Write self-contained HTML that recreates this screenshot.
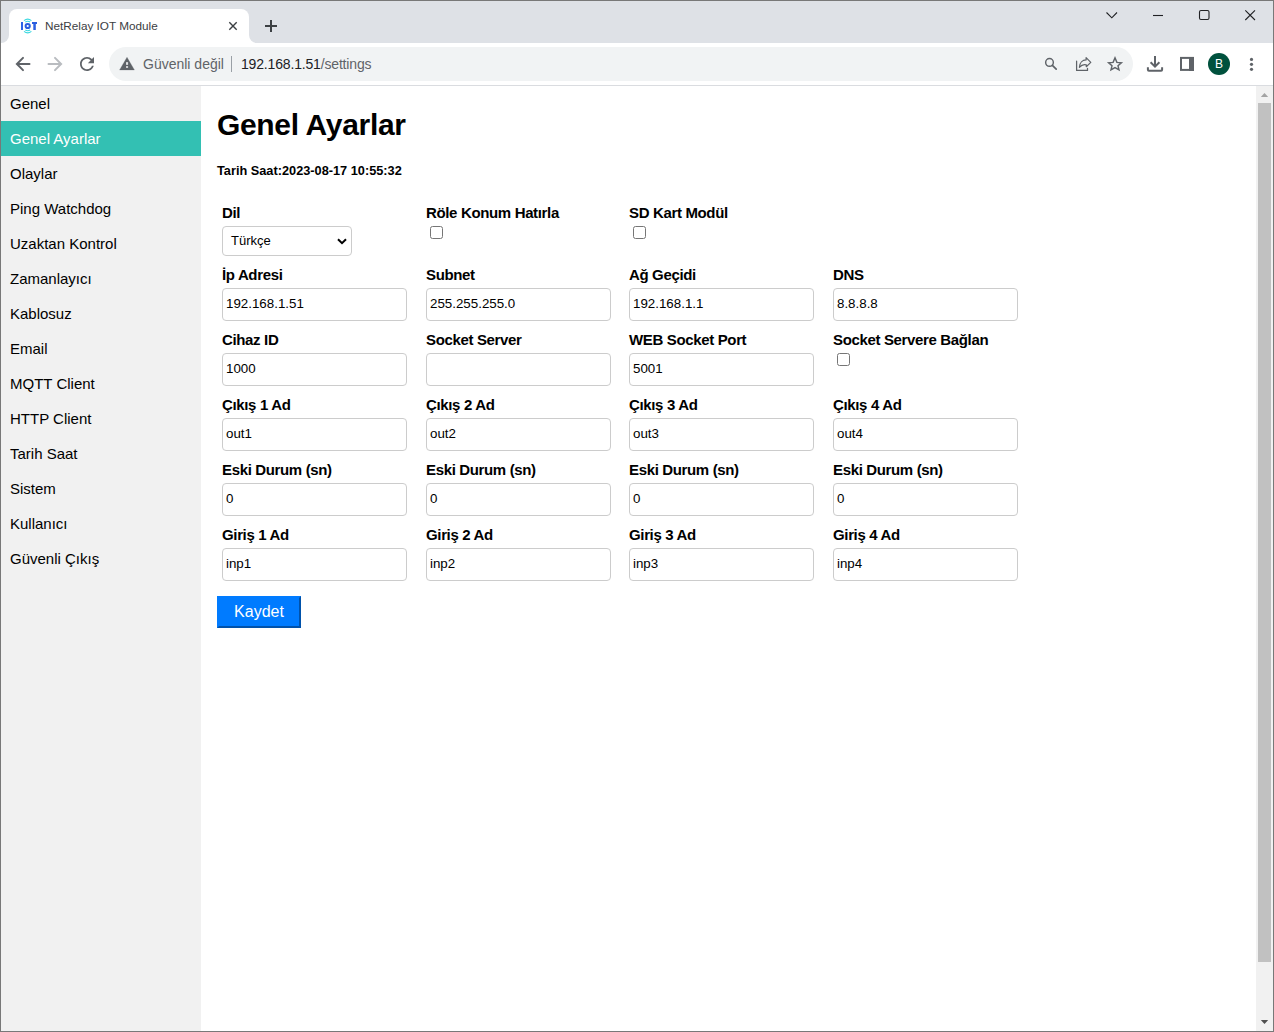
<!DOCTYPE html>
<html><head><meta charset="utf-8">
<style>
*{box-sizing:border-box}
html,body{margin:0;padding:0;width:1274px;height:1032px;overflow:hidden;background:#fff;font-family:"Liberation Sans",sans-serif}
.a{position:absolute}
#tabstrip{left:0;top:0;width:1274px;height:43px;background:#dee1e6}
#tab{left:9px;top:9px;width:240px;height:34px;background:#fff;border-radius:8px 8px 0 0}
.flare{top:35px;width:8px;height:8px;background:#fff}
.flare i{position:absolute;left:0;top:0;width:8px;height:8px;background:#dee1e6}
#tabtitle{left:45px;top:18.5px;font-size:11.75px;color:#3c4043;white-space:nowrap}
#toolbar{left:0;top:43px;width:1274px;height:42px;background:#fff}
#sep{left:0;top:85px;width:1274px;height:1px;background:#dadce0}
#omni{left:109px;top:47px;width:1024px;height:34px;background:#f1f3f4;border-radius:17px}
#omnitext{left:143px;top:56px;font-size:14px;color:#5f6368;white-space:nowrap}
#url{left:241px;top:56px;font-size:14px;letter-spacing:-0.17px;color:#202124;white-space:nowrap}
#url span{color:#5f6368}
#bar{left:231px;top:56px;width:1px;height:16px;background:#9aa0a6}
#avatar{left:1208px;top:53px;width:22px;height:22px;border-radius:50%;background:#00513d;color:#fff;font-size:12px;text-align:center;line-height:22px}
#sidebar{left:1px;top:86px;width:200px;height:945px;background:#f1f1f1}
.nav{position:absolute;left:0;width:200px;height:35px;font-size:15px;color:#000;padding-left:9px;line-height:35px;white-space:nowrap}
.nav.act{background:#33c0b3;color:#fff}
#scroll{left:1256px;top:86px;width:17px;height:945px;background:#f1f1f1}
#thumb{left:1258px;top:103px;width:13px;height:859px;background:#c1c1c1}
.bl{background:#787878}
h1{position:absolute;margin:0;left:217px;top:108px;font-size:30px;letter-spacing:-0.33px;font-weight:bold;white-space:nowrap;color:#000}
#dt{left:217px;top:163px;font-size:12.75px;font-weight:bold;white-space:nowrap}
.lbl{position:absolute;font-size:15px;letter-spacing:-0.35px;font-weight:bold;white-space:nowrap;color:#000}
.inp{position:absolute;width:185px;height:33px;border:1px solid #ccc;border-radius:4px;background:#fff;font-size:13.33px;color:#000;padding-left:3px;line-height:30px;white-space:nowrap}
.cb{position:absolute;width:13px;height:13px;border:1px solid #767676;border-radius:2.5px;background:#fff}
#sel{left:222px;top:226px;width:130px;height:30px;border:1px solid #ccc;border-radius:4px;font-size:13px;padding-left:8px;line-height:28px}
#btn{left:217px;top:596px;width:84px;height:32px;background:#007bff;border:2px outset #007bff;color:#fff;font-size:16px;text-align:center;line-height:28px}
</style></head><body>
<div class="a" id="tabstrip"></div>
<div class="a" id="tab"></div>
<div class="a flare" style="left:1px"><i style="border-radius:0 0 8px 0"></i></div>
<div class="a flare" style="left:249px"><i style="border-radius:0 0 0 8px"></i></div>
<div class="a" id="tabtitle">NetRelay IOT Module</div>
<div class="a" id="toolbar"></div>
<div class="a" id="omni"></div>
<div class="a" id="omnitext">Güvenli değil</div>
<div class="a" id="bar"></div>
<div class="a" id="url">192.168.1.51<span>/settings</span></div>
<div class="a" id="avatar">B</div>
<div class="a" id="sep"></div>

<svg class="a" style="left:0;top:0" width="1274" height="86" viewBox="0 0 1274 86">
 <!-- IOT favicon -->
 <g transform="translate(21,18)">
  <rect x="0" y="4" width="2" height="8" fill="#2a63e8"/>
  <circle cx="6.7" cy="8" r="2.1" fill="none" stroke="#2a5fe0" stroke-width="2"/>
  <rect x="11" y="4" width="5" height="2" fill="#2a5fe0"/>
  <rect x="12.3" y="4" width="2.5" height="8" fill="#2a5fe0"/>
  <path d="M3 2.6 Q6.7 -0.3 10.4 2.6 M4.3 3.9 Q6.7 2.5 9.1 3.9" fill="none" stroke="#3ad8e0" stroke-width="1.1"/>
  <path d="M3 13.4 Q6.7 16.3 10.4 13.4 M4.3 12.1 Q6.7 13.5 9.1 12.1" fill="none" stroke="#3ad8e0" stroke-width="1.1"/>
 </g>
 <!-- tab close -->
 <path d="M229.3 22.3 L236.7 29.7 M236.7 22.3 L229.3 29.7" stroke="#3c4043" stroke-width="1.4"/>
 <!-- new tab plus -->
 <path d="M271 20 V32 M265 26 H277" stroke="#3c4043" stroke-width="2"/>
 <!-- window controls -->
 <path d="M1106.5 12.5 L1111.8 17.8 L1117 12.5" fill="none" stroke="#202124" stroke-width="1.1"/>
 <path d="M1153 15.5 H1163" stroke="#202124" stroke-width="1.1"/>
 <rect x="1199.5" y="10.5" width="9.5" height="9" rx="1.5" fill="none" stroke="#202124" stroke-width="1.1"/>
 <path d="M1245.3 10.3 L1255 20 M1255 10.3 L1245.3 20" stroke="#202124" stroke-width="1.1"/>
 <!-- back -->
 <path d="M29.5 64 H17.5 M23 57.9 L16.9 64 L23 70.1" fill="none" stroke="#5f6368" stroke-width="2" stroke-linecap="round"/>
 <!-- forward -->
 <path d="M48.5 64 H60.5 M55 57.9 L61.1 64 L55 70.1" fill="none" stroke="#b9bcc0" stroke-width="2" stroke-linecap="round"/>
 <!-- reload -->
 <g transform="translate(76.5,53.5) scale(0.875)"><path fill="#5f6368" d="M17.65 6.35C16.2 4.9 14.21 4 12 4c-4.42 0-7.99 3.58-7.99 8s3.57 8 7.99 8c3.73 0 6.84-2.55 7.730-6h-2.08c-.82 2.33-3.04 4-5.65 4-3.310 0-6-2.690-6-6s2.690-6 6-6c1.66 0 3.14.69 4.22 1.78L13 11h7V4l-2.35 2.35z"/></g>
 <!-- warning -->
 <path d="M127 57.3 L134.4 69.9 H119.6 Z M126 62 V65 H128.1 V62 Z M126 66 V68 H128.1 V66 Z" fill="#5f6368" fill-rule="evenodd" stroke="#5f6368" stroke-width="0.3" stroke-linejoin="round"/>
 <!-- search -->
 <circle cx="1049.5" cy="62.4" r="3.85" fill="none" stroke="#5f6368" stroke-width="1.45"/>
 <path d="M1052.4 65.3 L1056.2 69.1" stroke="#5f6368" stroke-width="1.7" stroke-linecap="round"/>
 <!-- share -->
 <path d="M1076.6 61.2 V70.4 H1087.5 V68.3" fill="none" stroke="#5f6368" stroke-width="1.25" stroke-linejoin="round" stroke-linecap="round"/>
 <path d="M1079.4 67.3 C1079.6 62.6 1082.6 60 1086.1 59.9 V57.6 L1090.8 62.4 L1086.3 66.7 V64.8 C1083.6 64 1081.4 64.9 1079.4 67.3 Z" fill="none" stroke="#5f6368" stroke-width="1.2" stroke-linejoin="round"/>
 <!-- star -->
 <path d="M1115 57.9 L1116.9 62.4 L1121.4 62.8 L1118 65.8 L1119 69.9 L1115 67.7 L1111 69.9 L1112 65.8 L1108.6 62.8 L1113.1 62.4 Z" fill="none" stroke="#5f6368" stroke-width="1.45" stroke-linejoin="miter"/>
 <!-- download -->
 <path d="M1155 56 V66.5 M1150.6 62.2 L1155 66.6 L1159.4 62.2" fill="none" stroke="#5f6368" stroke-width="2"/>
 <path d="M1147.9 67.3 V69.8 Q1147.9 70.8 1148.9 70.8 H1161.1 Q1162.1 70.8 1162.1 69.8 V67.3" fill="none" stroke="#5f6368" stroke-width="2"/>
 <!-- side panel -->
 <rect x="1181" y="57.9" width="12" height="12" fill="none" stroke="#5f6368" stroke-width="2"/>
 <rect x="1189" y="57" width="5" height="14" fill="#5f6368"/>
 <!-- dots -->
 <circle cx="1251.5" cy="59.4" r="1.6" fill="#5f6368"/>
 <circle cx="1251.5" cy="64.3" r="1.6" fill="#5f6368"/>
 <circle cx="1251.5" cy="69.3" r="1.6" fill="#5f6368"/>
</svg>



<div class="a" id="sidebar">
<div class="nav" style="top:0">Genel</div>
<div class="nav act" style="top:35px">Genel Ayarlar</div>
<div class="nav" style="top:70px">Olaylar</div>
<div class="nav" style="top:105px">Ping Watchdog</div>
<div class="nav" style="top:140px">Uzaktan Kontrol</div>
<div class="nav" style="top:175px">Zamanlayıcı</div>
<div class="nav" style="top:210px">Kablosuz</div>
<div class="nav" style="top:245px">Email</div>
<div class="nav" style="top:280px">MQTT Client</div>
<div class="nav" style="top:315px">HTTP Client</div>
<div class="nav" style="top:350px">Tarih Saat</div>
<div class="nav" style="top:385px">Sistem</div>
<div class="nav" style="top:420px">Kullanıcı</div>
<div class="nav" style="top:455px">Güvenli Çıkış</div>
</div>

<h1>Genel Ayarlar</h1>
<div class="a" id="dt">Tarih Saat:2023-08-17 10:55:32</div>

<div class="lbl" style="left:222px;top:204px">Dil</div>
<div class="a" id="sel">Türkçe</div>
<svg class="a" style="left:336px;top:237px" width="12" height="9"><path d="M2 2.2 L6 6.2 L10 2.2" fill="none" stroke="#000" stroke-width="2"/></svg>
<div class="lbl" style="left:426px;top:204px">Röle Konum Hatırla</div>
<div class="cb" style="left:430px;top:226px"></div>
<div class="lbl" style="left:629px;top:204px">SD Kart Modül</div>
<div class="cb" style="left:633px;top:226px"></div>

<div class="lbl" style="left:222px;top:266px">İp Adresi</div>
<div class="inp" style="left:222px;top:288px">192.168.1.51</div>
<div class="lbl" style="left:426px;top:266px">Subnet</div>
<div class="inp" style="left:426px;top:288px">255.255.255.0</div>
<div class="lbl" style="left:629px;top:266px">Ağ Geçidi</div>
<div class="inp" style="left:629px;top:288px">192.168.1.1</div>
<div class="lbl" style="left:833px;top:266px">DNS</div>
<div class="inp" style="left:833px;top:288px">8.8.8.8</div>

<div class="lbl" style="left:222px;top:331px">Cihaz ID</div>
<div class="inp" style="left:222px;top:353px">1000</div>
<div class="lbl" style="left:426px;top:331px">Socket Server</div>
<div class="inp" style="left:426px;top:353px"></div>
<div class="lbl" style="left:629px;top:331px">WEB Socket Port</div>
<div class="inp" style="left:629px;top:353px">5001</div>
<div class="lbl" style="left:833px;top:331px">Socket Servere Bağlan</div>
<div class="cb" style="left:837px;top:353px"></div>

<div class="lbl" style="left:222px;top:396px">Çıkış 1 Ad</div>
<div class="inp" style="left:222px;top:418px">out1</div>
<div class="lbl" style="left:426px;top:396px">Çıkış 2 Ad</div>
<div class="inp" style="left:426px;top:418px">out2</div>
<div class="lbl" style="left:629px;top:396px">Çıkış 3 Ad</div>
<div class="inp" style="left:629px;top:418px">out3</div>
<div class="lbl" style="left:833px;top:396px">Çıkış 4 Ad</div>
<div class="inp" style="left:833px;top:418px">out4</div>

<div class="lbl" style="left:222px;top:461px">Eski Durum (sn)</div>
<div class="inp" style="left:222px;top:483px">0</div>
<div class="lbl" style="left:426px;top:461px">Eski Durum (sn)</div>
<div class="inp" style="left:426px;top:483px">0</div>
<div class="lbl" style="left:629px;top:461px">Eski Durum (sn)</div>
<div class="inp" style="left:629px;top:483px">0</div>
<div class="lbl" style="left:833px;top:461px">Eski Durum (sn)</div>
<div class="inp" style="left:833px;top:483px">0</div>

<div class="lbl" style="left:222px;top:526px">Giriş 1 Ad</div>
<div class="inp" style="left:222px;top:548px">inp1</div>
<div class="lbl" style="left:426px;top:526px">Giriş 2 Ad</div>
<div class="inp" style="left:426px;top:548px">inp2</div>
<div class="lbl" style="left:629px;top:526px">Giriş 3 Ad</div>
<div class="inp" style="left:629px;top:548px">inp3</div>
<div class="lbl" style="left:833px;top:526px">Giriş 4 Ad</div>
<div class="inp" style="left:833px;top:548px">inp4</div>

<div class="a" id="btn">Kaydet</div>

<div class="a" id="scroll"></div>
<div class="a" id="thumb"></div>
<svg class="a" style="left:1256px;top:86px" width="17" height="945">
 <path d="M4.8 11 L8.5 7 L12.2 11 Z" fill="#a3a3a3"/>
 <path d="M4.8 934 L8.5 938 L12.2 934 Z" fill="#505050"/>
</svg>

<div class="a bl" style="left:0;top:0;width:1274px;height:1px"></div>
<div class="a bl" style="left:0;top:1031px;width:1274px;height:1px"></div>
<div class="a bl" style="left:0;top:0;width:1px;height:1032px"></div>
<div class="a bl" style="left:1273px;top:0;width:1px;height:1032px"></div>
</body></html>
